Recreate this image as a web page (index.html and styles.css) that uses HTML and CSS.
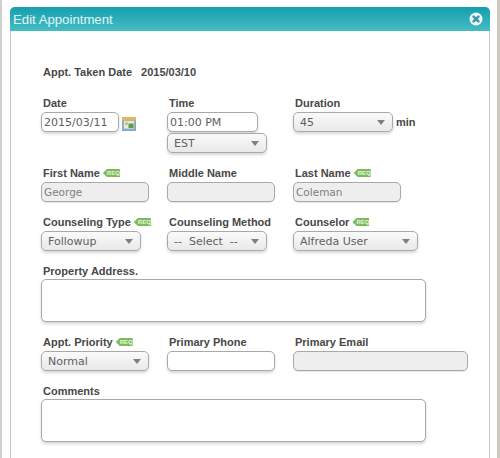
FILE: index.html
```html
<!DOCTYPE html>
<html lang="en">
<head>
  <meta charset="UTF-8">
  <title>Edit Appointment</title>
  <meta name="viewport" content="width=device-width, initial-scale=1.0">
  <link rel="stylesheet" href="styles.css">
</head>
<body>
  <div class="dialog" role="dialog" aria-label="Edit Appointment">
    <div class="dialog-header">
      <span class="dialog-title">Edit Appointment</span>
      <svg class="close-icon" width="14" height="14" viewBox="0 0 14 14" aria-label="Close">
        <circle cx="7" cy="7" r="6.5" fill="#eef9f9"/>
        <path d="M4.6 4.6 L9.4 9.4 M9.4 4.6 L4.6 9.4" stroke="#3c9aa6" stroke-width="2.6" stroke-linecap="round"/>
      </svg>
    </div>

    <form class="dialog-body">
      <div class="taken-row">
        <span>Appt. Taken Date</span>
        <span>2015/03/10</span>
      </div>

      <div class="row">
        <div class="col">
          <label>Date</label>
          <div class="date-wrap">
            <input class="field w-78" type="text" value="2015/03/11">
            <!-- calendar icon -->
            <svg class="cal-icon" width="14" height="14" viewBox="0 0 14 14">
              <rect x="0.5" y="0.5" width="13" height="13" fill="#8fb2cf" stroke="#86a8c4"/>
              <rect x="0" y="0" width="14" height="3.5" fill="#e2b567"/>
              <rect x="2" y="4" width="10" height="7.5" fill="#e6ecd8"/>
              <rect x="6.5" y="6.5" width="5" height="4.5" fill="#5f9a45"/>
              <rect x="3" y="5" width="3" height="3" fill="#b9c9a0"/>
            </svg>
          </div>
        </div>
        <div class="col">
          <label>Time</label>
          <input class="field w-91" type="text" value="01:00 PM">
          <div class="select-wrap w-100 stacked">
            <select class="field-select"><option>EST</option></select>
          </div>
        </div>
        <div class="col">
          <label>Duration</label>
          <div class="date-wrap">
            <div class="select-wrap w-100">
              <select class="field-select"><option>45</option></select>
            </div>
            <span class="unit">min</span>
          </div>
        </div>
      </div>

      <div class="row">
        <div class="col">
          <label>First Name <span class="req">REQ</span></label>
          <input class="field w-108 disabled" type="text" value="George" readonly>
        </div>
        <div class="col">
          <label>Middle Name</label>
          <input class="field w-108 disabled" type="text" readonly>
        </div>
        <div class="col">
          <label>Last Name <span class="req">REQ</span></label>
          <input class="field w-108 disabled" type="text" value="Coleman" readonly>
        </div>
      </div>

      <div class="row">
        <div class="col">
          <label>Counseling Type <span class="req">REQ</span></label>
          <div class="select-wrap w-100">
            <select class="field-select"><option>Followup</option></select>
          </div>
        </div>
        <div class="col">
          <label>Counseling Method</label>
          <div class="select-wrap w-100">
            <select class="field-select"><option>--&nbsp;&nbsp;Select&nbsp;&nbsp;--</option></select>
          </div>
        </div>
        <div class="col">
          <label>Counselor <span class="req">REQ</span></label>
          <div class="select-wrap w-125">
            <select class="field-select"><option>Alfreda User</option></select>
          </div>
        </div>
      </div>

      <div class="row">
        <div class="col-full">
          <label class="tight">Property Address.</label>
          <textarea class="area"></textarea>
        </div>
      </div>

      <div class="row">
        <div class="col">
          <label>Appt. Priority <span class="req">REQ</span></label>
          <div class="select-wrap w-108">
            <select class="field-select"><option>Normal</option></select>
          </div>
        </div>
        <div class="col">
          <label>Primary Phone</label>
          <input class="field w-108" type="text">
        </div>
        <div class="col">
          <label>Primary Email</label>
          <input class="field w-175 disabled" type="text" readonly>
        </div>
      </div>

      <div class="row">
        <div class="col-full">
          <label class="tight">Comments</label>
          <textarea class="area"></textarea>
        </div>
      </div>
    </form>
  </div>
</body>
</html>
```

FILE: styles.css
```css
/* Reset & base */
*, *::before, *::after {
  box-sizing: border-box;
}
html, body {
  margin: 0;
  padding: 0;
  height: 100%;
  overflow: hidden;
}
body {
  background: #fff;
  border-left: 2px solid #cfcfcf;
  border-right: 3px solid #c8c8be;
  padding: 7px 8px 0 8px;
  font-family: "Liberation Sans", Arial, sans-serif;
  color: #484848;
}

/* Dialog */
.dialog {
  width: 480px;
  height: 470px;
  background: #fff;
  border-left: 1px solid #c8c8c8;
  border-right: 1px solid #c8c8c8;
  border-radius: 5px 5px 0 0;
}
.dialog-header {
  display: flex;
  align-items: center;
  justify-content: space-between;
  height: 24px;
  margin: 0 -1px;
  padding: 0 7px 0 3px;
  background: linear-gradient(#159fae, #45bcc4);
  border-radius: 5px 5px 0 0;
}
.dialog-title {
  color: #e2f5f5;
  font-size: 13.2px;
}
.close-icon {
  display: block;
}

/* Form */
.dialog-body {
  padding: 34px 0 0 30px;
}
.taken-row {
  display: flex;
  gap: 9px;
  margin-bottom: 17px;
  padding-left: 2px;
  font-size: 11px;
  font-weight: bold;
  line-height: 14px;
}
.row {
  display: flex;
  margin-bottom: 13px;
}
.col {
  width: 126px;
  flex: none;
}
.col-full {
  width: 385px;
}
label {
  display: flex;
  align-items: center;
  gap: 3px;
  height: 14px;
  margin: 0 0 2px 2px;
  font-size: 11px;
  font-weight: bold;
  white-space: nowrap;
}
label.tight {
  margin-bottom: 1px;
}

/* Inputs */
.field, .field-select, .area {
  display: block;
  border: 1px solid #a9a9a9;
  border-radius: 5px;
  box-shadow: 0 2px 3px rgba(0, 0, 0, 0.16);
  font-family: "DejaVu Sans", Verdana, sans-serif;
  font-size: 11px;
  color: #606060;
  outline: none;
}
.field {
  height: 20px;
  padding: 0 2px;
}
.field.disabled {
  background: #eeeeee;
  color: #808080;
  font-size: 10.5px;
  box-shadow: 0 1px 1px rgba(0, 0, 0, 0.1);
}
.area {
  width: 100%;
  height: 43px;
  resize: none;
  background: #fff;
}
.w-78 { width: 78px; }
.w-91 { width: 91px; }
.w-100 { width: 100px; }
.w-108 { width: 108px; }
.w-125 { width: 125px; }
.w-175 { width: 175px; }

/* Select with css arrow */
.select-wrap {
  position: relative;
  height: 20px;
}
.select-wrap.stacked {
  margin-top: 1px;
}
.select-wrap::after {
  content: "";
  position: absolute;
  top: 8px;
  right: 8px;
  border-left: 4px solid transparent;
  border-right: 4px solid transparent;
  border-top: 5px solid #808080;
  pointer-events: none;
}
.field-select {
  width: 100%;
  height: 100%;
  padding: 0 0 0 6px;
  appearance: none;
  -webkit-appearance: none;
  background: linear-gradient(#fafafa, #e9e9e9);
}

/* Date + icon, select + unit */
.date-wrap {
  display: flex;
  align-items: center;
}
.cal-icon {
  margin: 4px 0 0 3px;
}
.unit {
  margin-left: 3px;
  font-size: 11px;
  font-weight: bold;
}
.date-wrap .select-wrap {
  flex: none;
}

/* REQ tag */
.req {
  display: inline-block;
  width: 17px;
  height: 8px;
  padding-left: 4px;
  background: #7dbb5a;
  color: #e9f6df;
  font-size: 6px;
  line-height: 8px;
  font-weight: bold;
  clip-path: polygon(0 50%, 4px 0, 100% 0, 100% 100%, 4px 100%);
}
```
